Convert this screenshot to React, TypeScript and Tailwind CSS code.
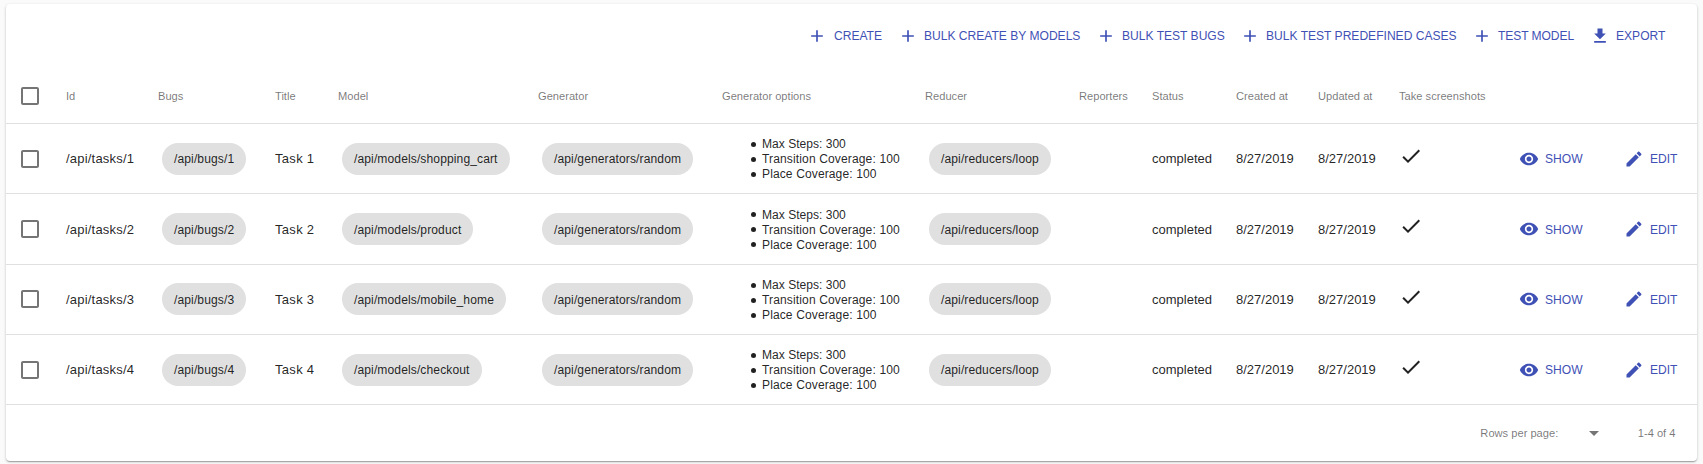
import React from "react";

const ICONS = {
  add: "M19 13h-6v6h-2v-6H5v-2h6V5h2v6h6v2z",
  download: "M19 9h-4V3H9v6H5l7 7 7-7zM5 18v2h14v-2H5z",
  box: "M19 5v14H5V5h14m0-2H5c-1.1 0-2 .9-2 2v14c0 1.1.9 2 2 2h14c1.1 0 2-.9 2-2V5c0-1.1-.9-2-2-2z",
  check: "M9 16.17L4.83 12l-1.42 1.41L9 19 21 7l-1.41-1.41z",
  eye: "M12 4.5C7 4.5 2.73 7.61 1 12c1.73 4.39 6 7.5 11 7.5s9.27-3.11 11-7.5c-1.73-4.39-6-7.5-11-7.5zM12 17c-2.76 0-5-2.24-5-5s2.24-5 5-5 5 2.24 5 5-2.24 5-5 5zm0-8c-1.66 0-3 1.34-3 3s1.34 3 3 3 3-1.34 3-3-1.34-3-3-3z",
  pencil:
    "M3 17.25V21h3.75L17.81 9.94l-3.75-3.75L3 17.25zM20.71 7.04c.39-.39.39-1.02 0-1.41l-2.34-2.34c-.39-.39-1.02-.39-1.41 0l-1.83 1.83 3.75 3.75 1.83-1.83z",
  dropdown: "M7 10l5 5 5-5z",
};

type IconName = keyof typeof ICONS;

function Icon({ name, className }: { name: IconName; className: string }) {
  return (
    <svg viewBox="0 0 24 24" fill="currentColor" className={`shrink-0 ${className}`}>
      <path d={ICONS[name]} />
    </svg>
  );
}

const GRID =
  "grid grid-cols-[60px_92px_117px_63px_200px_184px_203px_154px_73px_84px_82px_81px_120px_105px_73px] items-center border-b border-[#e0e0e0]";

const HEADERS = [
  "Id",
  "Bugs",
  "Title",
  "Model",
  "Generator",
  "Generator options",
  "Reducer",
  "Reporters",
  "Status",
  "Created at",
  "Updated at",
  "Take screenshots",
];

const ACTIONS: { label: string; icon: IconName; className: string }[] = [
  { label: "CREATE", icon: "add", className: "w-[75px] gap-[7px]" },
  { label: "BULK CREATE BY MODELS", icon: "add", className: "w-[182px] gap-[6px]" },
  { label: "BULK TEST BUGS", icon: "add", className: "w-[128px] gap-[6px]" },
  { label: "BULK TEST PREDEFINED CASES", icon: "add", className: "w-[216px] gap-[6px]" },
  { label: "TEST MODEL", icon: "add", className: "w-[102px] gap-[6px] tracking-[-0.08px]" },
  { label: "EXPORT", icon: "download", className: "w-[75px] gap-[6px]" },
];

const OPTIONS = [
  { text: "Max Steps: 300", className: "" },
  { text: "Transition Coverage: 100", className: "tracking-[0.12px]" },
  { text: "Place Coverage: 100", className: "tracking-[0.1px]" },
];

const TASKS = [
  { id: 1, model: "shopping_cart" },
  { id: 2, model: "product" },
  { id: 3, model: "mobile_home" },
  { id: 4, model: "checkout" },
];

function Action({
  label,
  icon,
  className,
  labelClassName = "",
}: {
  label: string;
  icon: IconName;
  className: string;
  labelClassName?: string;
}) {
  return (
    <button className={`flex items-center whitespace-nowrap text-[12.07px] leading-[14px] text-[#3f51b5] ${className}`}>
      <Icon name={icon} className="size-5" />
      <span className={labelClassName}>{label}</span>
    </button>
  );
}

function Chip({ children }: { children: React.ReactNode }) {
  return (
    <span className="ml-1 inline-flex h-8 items-center justify-self-start rounded-full bg-[#e0e0e0] px-3 text-[12.07px] leading-[14px] tracking-[0.11px] whitespace-nowrap">
      <span className="pt-[1.2px]">{children}</span>
    </span>
  );
}

function Checkbox() {
  return <Icon name="box" className="ml-3 size-6 text-black/54" />;
}

export default function App() {
  return (
    <div className="h-[464px] overflow-hidden bg-[#fafafa] pt-1 pl-[6px] font-['Liberation_Sans',Arial,sans-serif] text-black/87">
      <div className="h-[457px] w-[1691px] rounded bg-white shadow-[0px_1px_3px_0px_rgba(0,0,0,0.2),0px_1px_1px_0px_rgba(0,0,0,0.14),0px_2px_1px_-1px_rgba(0,0,0,0.12)]">
        <div className="flex h-16 items-center justify-end gap-4 pr-8">
          {ACTIONS.map((a) => (
            <Action key={a.label} {...a} />
          ))}
        </div>

        <div className={`${GRID} h-14 pt-px text-[11.14px] whitespace-nowrap text-black/54`}>
          <Checkbox />
          {HEADERS.map((h) => (
            <span key={h}>{h}</span>
          ))}
        </div>

        {TASKS.map((t) => (
          <div key={t.id} className={`${GRID} h-[70.33px] text-[13px] leading-[15px] whitespace-nowrap`}>
            <Checkbox />
            <span className="pt-[0.2px] tracking-[0.2px]">/api/tasks/{t.id}</span>
            <Chip>/api/bugs/{t.id}</Chip>
            <span className="pt-[0.2px] tracking-[0.3px]">Task {t.id}</span>
            <Chip>/api/models/{t.model}</Chip>
            <Chip>/api/generators/random</Chip>
            <ul className="pt-[2.2px] pl-[29px] text-[12.07px] leading-[14px]">
              {OPTIONS.map((o) => (
                <li key={o.text} className={`flex h-[15px] items-start gap-[6px] ${o.className}`}>
                  <span className="mt-[4.6px] size-[5px] rounded-full bg-black/87" />
                  <span>{o.text}</span>
                </li>
              ))}
            </ul>
            <Chip>/api/reducers/loop</Chip>
            <span />
            <span className="pt-[0.2px]">completed</span>
            <span className="pt-[0.2px]">8/27/2019</span>
            <span className="pt-[0.2px]">8/27/2019</span>
            <Icon name="check" className="mb-[5.33px] size-6" />
            <Action label="SHOW" icon="eye" className="gap-[6px]" labelClassName="pt-[1.2px]" />
            <Action label="EDIT" icon="pencil" className="gap-[6px]" labelClassName="pt-[1.2px]" />
          </div>
        ))}

        <div className="flex h-14 items-center justify-end pr-[21.5px] text-[11.14px] text-black/54">
          <span>Rows per page:</span>
          <Icon name="dropdown" className="mr-8 ml-[23.5px] size-6" />
          <span>1-4 of 4</span>
        </div>
      </div>
    </div>
  );
}
